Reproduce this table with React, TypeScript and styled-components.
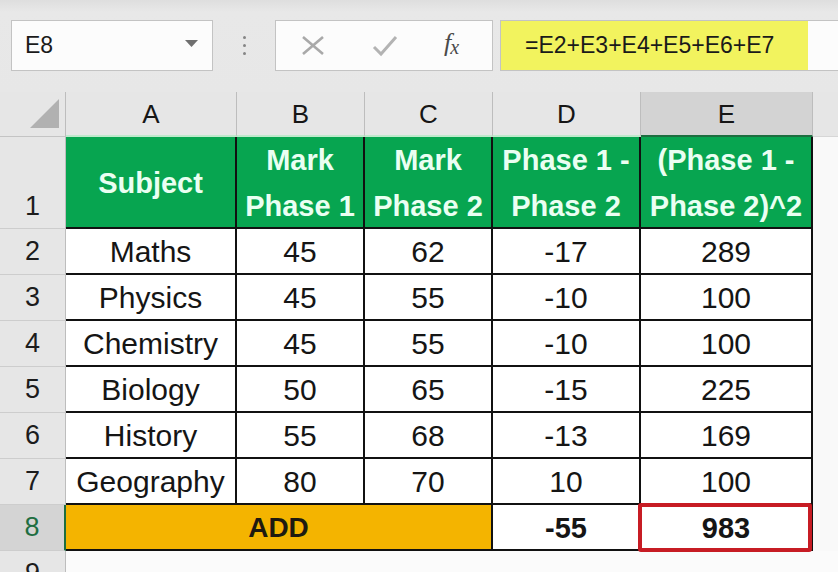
import React from 'react'
import styled, { createGlobalStyle, css } from 'styled-components'

const GlobalStyle = createGlobalStyle`
  html, body {
    margin: 0;
    padding: 0;
    background: #e6e6e6;
    overflow: hidden;
  }
  body {
    font-family: "Liberation Sans", Arial, sans-serif;
    color: #1a1a1a;
  }
`

type Row = {
  num: number
  subject: string
  p1: number
  p2: number
}

const rows: Row[] = [
  { num: 2, subject: 'Maths', p1: 45, p2: 62 },
  { num: 3, subject: 'Physics', p1: 45, p2: 55 },
  { num: 4, subject: 'Chemistry', p1: 45, p2: 55 },
  { num: 5, subject: 'Biology', p1: 50, p2: 65 },
  { num: 6, subject: 'History', p1: 55, p2: 68 },
  { num: 7, subject: 'Geography', p1: 80, p2: 70 },
]

const columns = ['A', 'B', 'C', 'D', 'E']

const App: React.FC = () => {
  const diffs = rows.map(r => r.p1 - r.p2)
  const diffSum = diffs.reduce((a, b) => a + b, 0)
  const sqSum = diffs.reduce((a, b) => a + b * b, 0)

  return (
    <>
      <GlobalStyle />
      <StyledPage>
        <StyledToolbar>
          <StyledNameBox>
            <StyledNameText>E8</StyledNameText>
            <svg width="13" height="7" viewBox="0 0 13 7">
              <polygon points="0,0 13,0 6.5,7" fill="#6f6f6f" />
            </svg>
          </StyledNameBox>

          <StyledDots>
            <span />
            <span />
            <span />
          </StyledDots>

          <StyledFuncBox>
            <svg width="24" height="19" viewBox="0 0 24 19">
              <path d="M2 1 L22 18 M22 1 L2 18" stroke="#a9a9a9" strokeWidth="2.6" fill="none" />
            </svg>
            <svg width="26" height="22" viewBox="0 0 26 22">
              <path d="M2 12 L9 19 L24 2" stroke="#b3b3b3" strokeWidth="3" fill="none" />
            </svg>
            <StyledFx>
              f<sub>x</sub>
            </StyledFx>
          </StyledFuncBox>

          <StyledFormulaBox>
            <StyledHighlight>=E2+E3+E4+E5+E6+E7</StyledHighlight>
          </StyledFormulaBox>
        </StyledToolbar>

        <StyledGrid>
          <StyledCorner>
            <svg width="29" height="29" viewBox="0 0 29 29">
              <polygon points="29,0 29,29 0,29" fill="#b1b1b1" />
            </svg>
          </StyledCorner>
          {columns.map(c => (
            <StyledColHead key={c} $selected={c === 'E'}>
              {c}
            </StyledColHead>
          ))}
          <StyledColFiller />

          <StyledRowHead $bottom>1</StyledRowHead>
          <StyledGreen>Subject</StyledGreen>
          <StyledGreen>
            Mark
            <br />
            Phase 1
          </StyledGreen>
          <StyledGreen>
            Mark
            <br />
            Phase 2
          </StyledGreen>
          <StyledGreen>
            Phase 1 -
            <br />
            Phase 2
          </StyledGreen>
          <StyledGreen>
            (Phase 1 -
            <br />
            Phase 2)^2
          </StyledGreen>
          <StyledBlank />

          {rows.map((r, i) => (
            <React.Fragment key={r.num}>
              <StyledRowHead>{r.num}</StyledRowHead>
              <StyledCell>{r.subject}</StyledCell>
              <StyledCell>{r.p1}</StyledCell>
              <StyledCell>{r.p2}</StyledCell>
              <StyledCell>{diffs[i]}</StyledCell>
              <StyledCell>{diffs[i] * diffs[i]}</StyledCell>
              <StyledBlank />
            </React.Fragment>
          ))}

          <StyledRowHead $selected>8</StyledRowHead>
          <StyledAddCell>ADD</StyledAddCell>
          <StyledCell $bold>{diffSum}</StyledCell>
          <StyledCell $bold>
            {sqSum}
            <StyledRedFrame />
          </StyledCell>
          <StyledBlank />

          <StyledRowHead>9</StyledRowHead>
          <StyledRowNine />
        </StyledGrid>
      </StyledPage>
    </>
  )
}

const StyledPage = styled.div`
  width: 838px;
  height: 572px;
  overflow: hidden;
  background: #e6e6e6;
`

const StyledToolbar = styled.div`
  height: 92px;
  box-sizing: border-box;
  display: flex;
  align-items: flex-start;
  padding: 20px 0 0 11px;
  background: linear-gradient(#dedede 0px, #e8e8e8 12px, #e7e7e7 100%);
`

const boxBase = css`
  height: 51px;
  box-sizing: border-box;
  background: #fcfcfc;
  border: 1px solid #c3c3c3;
`

const StyledNameBox = styled.div`
  ${boxBase};
  width: 202px;
  display: flex;
  align-items: center;
  justify-content: space-between;
  padding: 0 14px 4px 13px;
`

const StyledNameText = styled.span`
  font-size: 23px;
  color: #1a1a1a;
  padding-top: 4px;
`

const StyledDots = styled.div`
  width: 62px;
  height: 51px;
  display: flex;
  flex-direction: column;
  align-items: center;
  justify-content: center;
  gap: 5px;

  span {
    width: 3px;
    height: 3px;
    border-radius: 50%;
    background: #858585;
  }
`

const StyledFuncBox = styled.div`
  ${boxBase};
  width: 218px;
  display: flex;
  align-items: center;
  padding: 0 0 0 25px;

  svg:first-child {
    margin-right: 47px;
  }
  svg:nth-child(2) {
    margin-right: 46px;
  }
`

const StyledFx = styled.span`
  font-family: "Liberation Serif", "Times New Roman", serif;
  font-style: italic;
  font-size: 26px;
  color: #4a4a4a;
  line-height: 1;
  margin-top: -4px;

  sub {
    font-size: 20px;
    vertical-align: -3px;
    margin-left: -1px;
  }
`

const StyledFormulaBox = styled.div`
  ${boxBase};
  flex: 1;
  margin-left: 7px;
  border-right: none;
  display: flex;
`

const StyledHighlight = styled.div`
  width: 307px;
  height: 100%;
  background: #f2f35e;
  display: flex;
  align-items: center;
  padding-left: 24px;
  box-sizing: border-box;
  font-size: 23px;
  color: #1a1a1a;
`

const StyledGrid = styled.div`
  display: grid;
  grid-template-columns: 66px 171px 128px 128px 148px 172px 1fr;
  grid-template-rows: 45px 92px repeat(7, 46px) 46px;
  background: #f9f9f9;
`

const StyledCorner = styled.div`
  background: #e6e6e6;
  border-right: 1px solid #bdbdbd;
  border-bottom: 1px solid #c4c4c4;
  box-sizing: border-box;
  display: flex;
  align-items: flex-end;
  justify-content: flex-end;
  padding: 0 6px 8px 0;
`

const StyledColHead = styled.div<{ $selected?: boolean }>`
  box-sizing: border-box;
  display: flex;
  align-items: center;
  justify-content: center;
  font-size: 26px;
  color: #161616;
  background: ${p => (p.$selected ? '#d3d3d3' : '#e6e6e6')};
  border-right: 1px solid #bdbdbd;
  border-bottom: 2px solid ${p => (p.$selected ? '#1d6e40' : '#bfe9cc')};
  padding-top: 2px;
`

const StyledColFiller = styled.div`
  background: #e6e6e6;
  border-bottom: 1px solid #d6d6d6;
`

const StyledRowHead = styled.div<{ $selected?: boolean; $bottom?: boolean }>`
  box-sizing: border-box;
  display: flex;
  justify-content: center;
  align-items: ${p => (p.$bottom ? 'flex-end' : 'center')};
  padding-bottom: ${p => (p.$bottom ? '6px' : '0')};
  font-size: 27px;
  color: ${p => (p.$selected ? '#1f6e42' : '#1c1c1c')};
  background: ${p => (p.$selected ? '#d4d4d4' : '#e6e6e6')};
  border-right: ${p => (p.$selected ? '2px solid #1d6e40' : '1px solid #bdbdbd')};
  border-bottom: 1px solid #cdcdcd;
`

const StyledGreen = styled.div`
  box-sizing: border-box;
  display: flex;
  align-items: center;
  justify-content: center;
  text-align: center;
  background: #07a550;
  color: #eafff2;
  font-weight: bold;
  font-size: 29px;
  line-height: 46px;
  white-space: nowrap;
  padding-top: 2px;
  border-right: 2px solid #111;
  border-bottom: 2px solid #111;
`

const StyledCell = styled.div<{ $bold?: boolean }>`
  position: relative;
  box-sizing: border-box;
  display: flex;
  align-items: center;
  justify-content: center;
  background: #fff;
  font-size: ${p => (p.$bold ? '29px' : '30px')};
  font-weight: ${p => (p.$bold ? 'bold' : 'normal')};
  color: #151515;
  white-space: nowrap;
  padding-top: 2px;
  border-right: 2px solid #111;
  border-bottom: 2px solid #111;
`

const StyledAddCell = styled.div`
  grid-column: span 3;
  box-sizing: border-box;
  display: flex;
  align-items: center;
  justify-content: center;
  background: #f4b400;
  font-size: 28px;
  font-weight: bold;
  color: #1e1a10;
  padding-top: 2px;
  border-right: 2px solid #111;
  border-bottom: 2px solid #111;
`

const StyledRedFrame = styled.div`
  position: absolute;
  left: -3px;
  top: -2px;
  right: -1px;
  bottom: -3px;
  border: 4px solid #c71c24;
  border-radius: 3px;
  pointer-events: none;
`

const StyledBlank = styled.div`
  background: #f9f9f9;
`

const StyledRowNine = styled.div`
  grid-column: 2 / -1;
  background: #fbfbfb;
`

export default App
